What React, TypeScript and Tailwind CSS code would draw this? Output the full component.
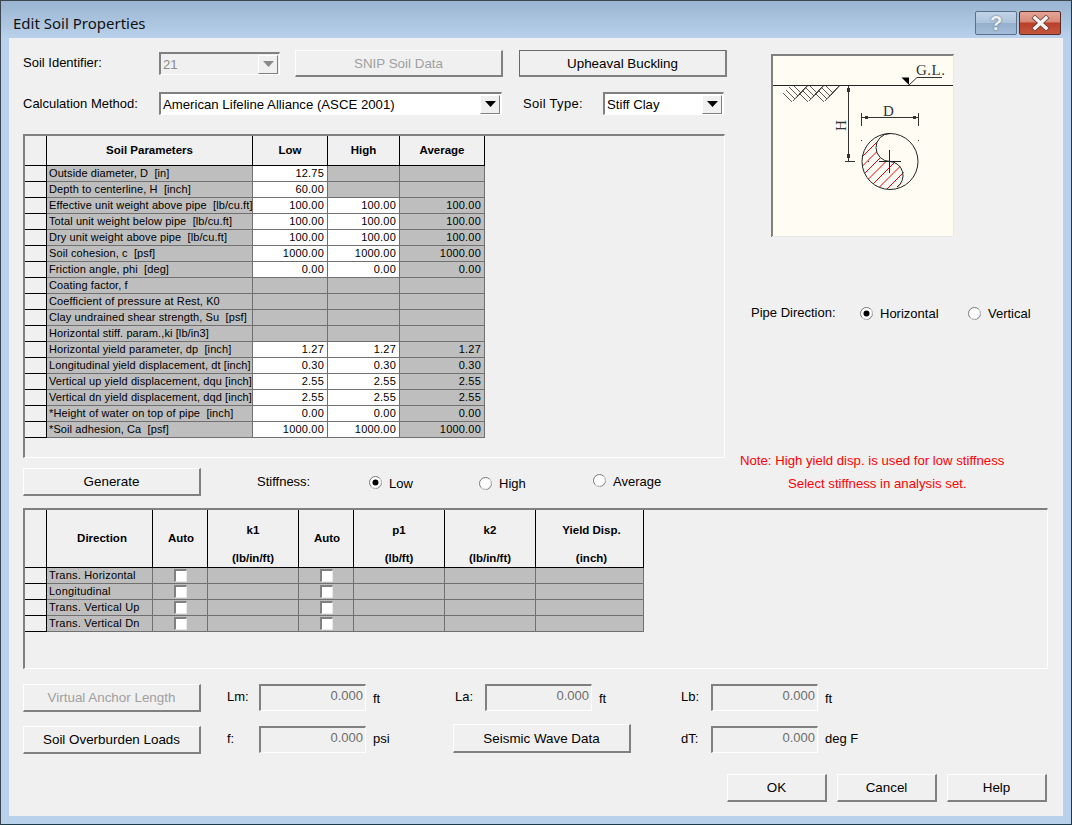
import type { ReactNode } from "react";

const soilRows = [
  ["Outside diameter, D  [in]", "12.75", "", ""],
  ["Depth to centerline, H  [inch]", "60.00", "", ""],
  ["Effective unit weight above pipe  [lb/cu.ft]", "100.00", "100.00", "100.00"],
  ["Total unit weight below pipe  [lb/cu.ft]", "100.00", "100.00", "100.00"],
  ["Dry unit weight above pipe  [lb/cu.ft]", "100.00", "100.00", "100.00"],
  ["Soil cohesion, c  [psf]", "1000.00", "1000.00", "1000.00"],
  ["Friction angle, phi  [deg]", "0.00", "0.00", "0.00"],
  ["Coating factor, f", "", "", ""],
  ["Coefficient of pressure at Rest, K0", "", "", ""],
  ["Clay undrained shear strength, Su  [psf]", "", "", ""],
  ["Horizontal stiff. param.,ki [lb/in3]", "", "", ""],
  ["Horizontal yield parameter, dp  [inch]", "1.27", "1.27", "1.27"],
  ["Longitudinal yield displacement, dt [inch]", "0.30", "0.30", "0.30"],
  ["Vertical up yield displacement, dqu [inch]", "2.55", "2.55", "2.55"],
  ["Vertical dn yield displacement, dqd [inch]", "2.55", "2.55", "2.55"],
  ["*Height of water on top of pipe  [inch]", "0.00", "0.00", "0.00"],
  ["*Soil adhesion, Ca  [psf]", "1000.00", "1000.00", "1000.00"],
];

const directions = ["Trans. Horizontal", "Longitudinal", "Trans. Vertical Up", "Trans. Vertical Dn"];

function Button({ children, disabled, strong, className }: { children: ReactNode; disabled?: boolean; strong?: boolean; className: string }) {
  return (
    <div
      className={`flex items-center justify-center text-[13.400px] bg-[#f0f0f0] border-t border-l border-r-2 border-b-2 border-r-[#808080] border-b-[#808080] ${
        strong ? "border-t-[#696969] border-l-[#696969] border-r-[#555555] border-b-[#555555]" : "border-t-white border-l-white"
      } ${disabled ? "text-[#a0a0a0]" : "text-black"} ${className}`}
    >
      {children}
    </div>
  );
}

function Combo({ value, disabled, className }: { value: string; disabled?: boolean; className: string }) {
  return (
    <div className={`h-[23px] flex items-center justify-between text-[13.200px] border-t-2 border-l-2 border-t-[#808080] border-l-[#808080] border-r border-b border-r-white border-b-white ${disabled ? "bg-[#f0f0f0] text-[#8a8a8a]" : "bg-white text-black"} ${className}`}>
      <span className="pl-[2px] pt-[1px] whitespace-nowrap">{value}</span>
      <div className="w-[20px] h-[19px] mr-[1px] flex items-center justify-center bg-[#f0f0f0] border-t border-l border-t-white border-l-white border-r border-b border-r-[#808080] border-b-[#808080]">
        <svg width="11" height="6" viewBox="0 0 11 6">
          <path d="M0 0H11L5.5 6Z" fill={disabled ? "#8a8a8a" : "#000"} />
        </svg>
      </div>
    </div>
  );
}

function Radio({ checked }: { checked?: boolean }) {
  return (
    <svg width="13" height="13" viewBox="0 0 13 13" className="shrink-0">
      <circle cx="6.5" cy="6.5" r="6" fill="#fff" stroke="#777" />
      <path d="M2.3 10.700A6 6 0 0 0 10.700 2.300" fill="none" stroke="#e6e6e6" />
      {checked && <circle cx="6.5" cy="6.5" r="3" fill="#000" />}
    </svg>
  );
}

function ValueBox() {
  return (
    <div className="w-[107px] h-[27px] pr-[2px] pt-[1px] leading-[17px] text-right text-[#6d6d6d] bg-[#f0f0f0] border-t-2 border-l-2 border-t-[#808080] border-l-[#808080] border-r border-b border-r-white border-b-white">
      0.000
    </div>
  );
}

function Checkbox() {
  return <div className="mx-auto mt-[1px] mb-[1px] w-[13px] h-[13px] bg-white border-t-2 border-l-2 border-t-[#808080] border-l-[#808080] border-r border-b border-r-[#e8e8e8] border-b-[#e8e8e8]" />;
}

function SoilDiagram() {
  const hatch = [];
  for (let i = 0; i < 12; i++) {
    const x = 800 + i * 9.5;
    hatch.push(<line key={i} x1={x} y1={200} x2={x + 70} y2={130} stroke="#e8000b" strokeWidth="1" />);
  }
  const soil = [];
  for (const b of [792, 808, 824]) {
    for (let k = 0; k < 4; k++) {
      soil.push(<line key={`a${b}${k}`} x1={b - 9 + k * 3} y1={93 - k * 3} x2={b + k * 3} y2={102 - k * 3} stroke="#333" strokeWidth="0.8" />);
      if (k < 3) soil.push(<line key={`b${b}${k}`} x1={b + k * 3 + 1} y1={101 - k * 3} x2={b + k * 3 + 13} y2={88 - k * 3} stroke="#333" strokeWidth="0.8" />);
    }
  }
  return (
    <svg width="183" height="183" viewBox="771 54 183 183" className="block">
      <defs>
        <clipPath id="wet">
          <path d="M890 133.500A14 14 0 0 0 890 161.500A14 14 0 0 1 890 189.500A28 28 0 0 1 890 133.500Z" />
        </clipPath>
        <clipPath id="ground">
          <rect x="773" y="86" width="70" height="17" />
        </clipPath>
      </defs>
      <rect x="771" y="54" width="183" height="183" fill="#fffdf3" />
      <path d="M772 237V55H954" fill="none" stroke="#808080" strokeWidth="2" />
      <path d="M772 236.500H953.500V55" fill="none" stroke="#e8e8e8" />
      <line x1="773" y1="85.500" x2="953" y2="85.500" stroke="#222" />
      <g clipPath="url(#ground)">{soil}</g>
      <path d="M901.500 77.500H909V85Z" fill="#000" />
      <path d="M909 85L917 77.500H942" fill="none" stroke="#333" />
      <text x="916" y="75" fontFamily="'Liberation Serif', serif" fontSize="15" letterSpacing="0.5" fill="#333">G.L.</text>
      <line x1="848.500" y1="86" x2="848.500" y2="161" stroke="#333" />
      <rect x="847" y="88" width="3" height="4" fill="#333" />
      <rect x="847" y="154" width="3" height="4" fill="#333" />
      <line x1="845" y1="161.500" x2="855" y2="161.500" stroke="#333" />
      <text x="0" y="0" transform="translate(846 131) rotate(-90)" fontFamily="'Liberation Serif', serif" fontSize="15" fill="#333">H</text>
      <text x="883" y="116" fontFamily="'Liberation Serif', serif" fontSize="15" fill="#333">D</text>
      <line x1="862" y1="117.500" x2="918" y2="117.500" stroke="#333" />
      <line x1="861.500" y1="113" x2="861.500" y2="126" stroke="#333" />
      <line x1="918.500" y1="113" x2="918.500" y2="126" stroke="#333" />
      <rect x="865" y="116" width="3" height="3" fill="#333" />
      <rect x="913" y="116" width="3" height="3" fill="#333" />
      <rect x="861" y="140" width="1" height="1" fill="#333" />
      <rect x="918" y="140" width="1" height="1" fill="#333" />
      <rect x="868" y="161" width="1" height="1" fill="#333" />
      <g clipPath="url(#wet)">{hatch}</g>
      <circle cx="890" cy="161.500" r="28" fill="none" stroke="#222" />
      <path d="M890 133.500A14 14 0 0 0 890 161.500A14 14 0 0 1 897 187" fill="none" stroke="#222" />
      <line x1="889.500" y1="150" x2="889.500" y2="173" stroke="#222" />
      <line x1="879" y1="161.500" x2="901" y2="161.500" stroke="#222" />
    </svg>
  );
}

export default function App() {
  return (
    <div className="w-[1072px] h-[825px] overflow-hidden flex flex-col bg-[#b9d1ea] border-t border-r border-b border-l border-t-[#3c4650] border-r-[#1c3a4a] border-b-[#1c3a4a] border-l-[#3c4650] font-['Liberation_Sans',sans-serif] text-[13px] leading-[16px] text-black">
      {/* title bar */}
      <div className="h-[37px] shrink-0 flex items-start justify-between pl-[12px] pr-[10px] bg-gradient-to-b from-[#9ab4d1] to-[#b9d1ea]">
        <span className="mt-[13px] font-['Noto_Sans',sans-serif] text-[15px] leading-[18px] text-[#111111]">Edit Soil Properties</span>
        <div className="mt-[10px] flex gap-[2px]">
          <div className="w-[42px] h-[24px] flex items-center justify-center rounded-[2px] border border-[#5a6f8a] bg-[linear-gradient(#c2d4e7_0%,#adc4dc_48%,#95b0cc_52%,#a5bdd8_100%)] text-[20px] font-bold text-[#eef1f4] [text-shadow:0_0_2px_#4a5560]">?</div>
          <div className="w-[42px] h-[24px] flex items-center justify-center rounded-[2px] border border-[#5a2a28] bg-[linear-gradient(#e3a596_0%,#d88a78_45%,#bb3f27_50%,#c4573d_100%)]">
            <svg width="19" height="16" viewBox="0 0 19 16">
              <path d="M4 3L15 13M15 3L4 13" stroke="#6a3a34" strokeWidth="5" strokeLinecap="square" />
              <path d="M4 3L15 13M15 3L4 13" stroke="#f4f4f4" strokeWidth="3.500" strokeLinecap="square" />
            </svg>
          </div>
        </div>
      </div>

      {/* client area */}
      <div className="mx-[8px] h-[778px] shrink-0 bg-[#f0f0f0] pl-[14px] pt-[12px]">
        <div className="flex">
          <div className="w-[704px] shrink-0">
            <div className="flex items-start h-[27px]">
              <span className="w-[136px] mt-[5px]">Soil Identifier:</span>
              <Combo value="21" disabled className="w-[121px] mt-[2px]" />
              <Button disabled className="w-[208px] h-[27px] ml-[15px] pt-[1px]">SNIP Soil Data</Button>
              <Button strong className="w-[208px] h-[27px] ml-[16px] pt-[1px]">Upheaval Buckling</Button>
            </div>
            <div className="flex items-center h-[23px] mt-[15px]">
              <span className="w-[136px] pt-[1px]">Calculation Method:</span>
              <Combo value="American Lifeline Alliance (ASCE 2001)" className="w-[343px]" />
              <span className="ml-[21px] w-[80px] pt-[1px] tracking-[0.3px]">Soil Type:</span>
              <Combo value="Stiff Clay" className="w-[121px]" />
            </div>

            <div className="mt-[19px] w-[702px] h-[324px] border-t-2 border-l-2 border-t-[#808080] border-l-[#808080] border-r border-b border-r-white border-b-white">
              <table className="table-fixed w-[460px] border-separate border-spacing-0 text-[11px] leading-[14px]">
                <colgroup>
                  <col className="w-[22px]" />
                  <col className="w-[206px]" />
                  <col className="w-[75px]" />
                  <col className="w-[72px]" />
                  <col className="w-[85px]" />
                </colgroup>
                <thead>
                  <tr className="h-[30px] font-bold text-center text-[11.500px]">
                    <th className="p-0 pb-[2px] border-r border-b border-black" />
                    <th className="p-0 pb-[2px] border-r border-b border-black">Soil Parameters</th>
                    <th className="p-0 pb-[2px] border-r border-b border-black">Low</th>
                    <th className="p-0 pb-[2px] border-r border-b border-black">High</th>
                    <th className="p-0 pb-[2px] border-r border-b border-black">Average</th>
                  </tr>
                </thead>
                <tbody>
                  {soilRows.map(([name, low, high, avg]) => (
                    <tr key={name} className="h-[16px]">
                      <td className="p-0 border-r border-b border-black" />
                      <td className="p-0 pl-[2px] pb-[1px] tracking-[0.1px] bg-[#bebebe] border-r border-b border-r-[#707070] border-b-[#707070] whitespace-pre overflow-hidden">{name}</td>
                      <td className={`p-0 pr-[3px] pb-[1px] text-right tracking-[0.2px] border-r border-b border-r-[#707070] border-b-[#707070] ${low ? "bg-white" : "bg-[#bebebe]"}`}>{low}</td>
                      <td className={`p-0 pr-[3px] pb-[1px] text-right tracking-[0.2px] border-r border-b border-r-[#707070] border-b-[#707070] ${high ? "bg-white" : "bg-[#bebebe]"}`}>{high}</td>
                      <td className="p-0 pr-[3px] pb-[1px] text-right tracking-[0.2px] bg-[#bebebe] border-r border-b border-r-[#707070] border-b-[#707070]">{avg}</td>
                    </tr>
                  ))}
                </tbody>
              </table>
            </div>
          </div>

          <div className="ml-[24px]">
            <div className="ml-[20px] mt-[4px]">
              <SoilDiagram />
            </div>
            <div className="flex items-center mt-[67px] h-[18px]">
              <span className="w-[109px] -mt-[1px]">Pipe Direction:</span>
              <Radio checked />
              <span className="ml-[7px] w-[88px] pt-[1px]">Horizontal</span>
              <Radio />
              <span className="ml-[7px] pt-[1px]">Vertical</span>
            </div>
          </div>
        </div>

        <div className="flex items-start mt-[10px] h-[28px]">
          <Button className="w-[178px] h-[28px]">Generate</Button>
          <span className="ml-[56px] mt-[6px] w-[112px]">Stiffness:</span>
          <div className="mt-[8px]"><Radio checked /></div>
          <span className="ml-[7px] mt-[8px] w-[90px]">Low</span>
          <div className="mt-[9px]"><Radio /></div>
          <span className="ml-[7px] mt-[8px] w-[94px]">High</span>
          <div className="mt-[6px]"><Radio /></div>
          <span className="ml-[7px] mt-[6px] w-[127px]">Average</span>
          <div className="-mt-[19px] text-[#ff0000] text-[13.200px] leading-[23px] whitespace-nowrap">
            <div>Note: High yield disp. is used for low stiffness</div>
            <div className="pl-[48px]">Select stiffness in analysis set.</div>
          </div>
        </div>

        <div className="mt-[12px] w-[1025px] h-[161px] border-t-2 border-l-2 border-t-[#808080] border-l-[#808080] border-r border-b border-r-white border-b-white">
          <table className="table-fixed w-[619px] border-separate border-spacing-0 text-[11px] leading-[14px]">
            <colgroup>
              <col className="w-[22px]" />
              <col className="w-[106px]" />
              <col className="w-[55px]" />
              <col className="w-[91px]" />
              <col className="w-[55px]" />
              <col className="w-[91px]" />
              <col className="w-[91px]" />
              <col className="w-[108px]" />
            </colgroup>
            <thead>
              <tr className="h-[58px] font-bold text-center text-[11.500px]">
                <th className="p-0 pb-[2px] border-r border-b border-black" />
                <th className="p-0 pb-[2px] pl-[5px] border-r border-b border-black">Direction</th>
                <th className="p-0 pb-[2px] pl-[2px] border-r border-b border-black">Auto</th>
                <th className="p-0 pt-[10px] border-r border-b border-black">k1<br /><br />(lb/in/ft)</th>
                <th className="p-0 pb-[2px] pl-[2px] border-r border-b border-black">Auto</th>
                <th className="p-0 pt-[10px] border-r border-b border-black">p1<br /><br />(lb/ft)</th>
                <th className="p-0 pt-[10px] border-r border-b border-black">k2<br /><br />(lb/in/ft)</th>
                <th className="p-0 pt-[10px] pl-[4px] border-r border-b border-black">Yield Disp.<br /><br />(inch)</th>
              </tr>
            </thead>
            <tbody>
              {directions.map((d) => (
                <tr key={d} className="h-[16px]">
                  <td className="p-0 border-r border-b border-black" />
                  <td className="p-0 pl-[2px] pb-[1px] tracking-[0.2px] bg-[#bebebe] border-r border-b border-r-[#707070] border-b-[#707070] whitespace-nowrap">{d}</td>
                  <td className="p-0 bg-[#bebebe] border-r border-b border-r-[#707070] border-b-[#707070]"><Checkbox /></td>
                  <td className="p-0 bg-[#bebebe] border-r border-b border-r-[#707070] border-b-[#707070]" />
                  <td className="p-0 bg-[#bebebe] border-r border-b border-r-[#707070] border-b-[#707070]"><Checkbox /></td>
                  <td className="p-0 bg-[#bebebe] border-r border-b border-r-[#707070] border-b-[#707070]" />
                  <td className="p-0 bg-[#bebebe] border-r border-b border-r-[#707070] border-b-[#707070]" />
                  <td className="p-0 bg-[#bebebe] border-r border-b border-r-[#707070] border-b-[#707070]" />
                </tr>
              ))}
            </tbody>
          </table>
        </div>

        <div className="flex items-start mt-[15px] h-[28px]">
          <Button disabled className="w-[178px] h-[28px]">Virtual Anchor Length</Button>
          <span className="ml-[26px] w-[32px] mt-[5px]">Lm:</span>
          <ValueBox />
          <span className="ml-[7px] w-[82px] mt-[7px]">ft</span>
          <span className="w-[30px] mt-[5px]">La:</span>
          <ValueBox />
          <span className="ml-[7px] w-[82px] mt-[7px]">ft</span>
          <span className="w-[30px] mt-[5px]">Lb:</span>
          <ValueBox />
          <span className="ml-[7px] mt-[7px]">ft</span>
        </div>
        <div className="flex items-start mt-[14px] h-[28px]">
          <Button className="w-[178px] h-[28px]">Soil Overburden Loads</Button>
          <span className="ml-[26px] w-[32px] mt-[5px]">f:</span>
          <ValueBox />
          <span className="ml-[7px] w-[80px] mt-[5px]">psi</span>
          <Button className="w-[178px] h-[29px] -mt-[2px] pt-[1px]">Seismic Wave Data</Button>
          <span className="ml-[50px] w-[30px] mt-[5px]">dT:</span>
          <ValueBox />
          <span className="ml-[7px] mt-[5px]">deg F</span>
        </div>
        <div className="flex mt-[20px] ml-[704px] gap-[10px]">
          <Button className="w-[100px] h-[28px]">OK</Button>
          <Button className="w-[100px] h-[28px]">Cancel</Button>
          <Button className="w-[100px] h-[28px]">Help</Button>
        </div>
      </div>
    </div>
  );
}
